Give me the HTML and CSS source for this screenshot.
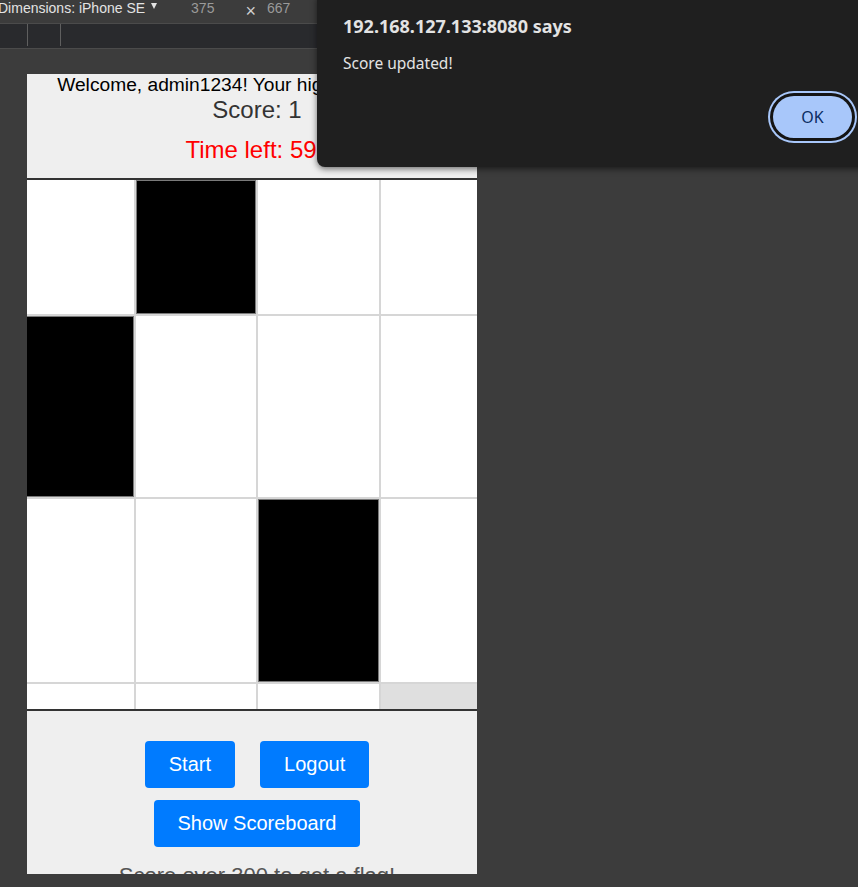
FILE: index.html
```html
<!DOCTYPE html>
<html lang="en">
<head>
<meta charset="utf-8">
<title>Tiles</title>
<link rel="stylesheet" href="styles.css">
</head>
<body>
<div class="devbar">
  <span class="dim">Dimensions: iPhone SE</span><span class="caret"></span>
  <span class="num num-w">375</span><span class="times">×</span><span class="num num-h">667</span>
</div>
<div class="toolbar"><span class="sep sep-a"></span><span class="sep sep-b"></span></div>
<div class="stage">
  <div class="device">
    <div class="page">
      <header class="hud">
        <p class="welcome">Welcome, admin1234! Your highest score is 10</p>
        <p class="score">Score: 1</p>
        <p class="timer">Time left: 59s</p>
      </header>
      <div class="board">
        <div class="tile"></div><div class="tile black"></div><div class="tile"></div><div class="tile"></div>
        <div class="tile black"></div><div class="tile"></div><div class="tile"></div><div class="tile"></div>
        <div class="tile"></div><div class="tile"></div><div class="tile black"></div><div class="tile"></div>
        <div class="tile"></div><div class="tile"></div><div class="tile"></div><div class="tile pressed"></div>
      </div>
      <footer class="controls">
        <div class="btn-row">
          <button class="btn">Start</button>
          <button class="btn">Logout</button>
        </div>
        <div class="btn-row second">
          <button class="btn">Show Scoreboard</button>
        </div>
        <p class="note">Score over 300 to get a flag!</p>
      </footer>
    </div>
  </div>
</div>
<div class="alert">
  <div class="alert-title">192.168.127.133:8080 says</div>
  <div class="alert-msg">Score updated!</div>
  <div class="alert-actions"><button class="alert-ok">OK</button></div>
</div>
</body>
</html>
```
FILE: styles.css
```css
html, body {
  margin: 0;
  padding: 0;
}
body {
  background: #3c3c3c;
  width: 858px;
  height: 887px;
  overflow: hidden;
  position: relative;
  font-family: "Liberation Sans", Arial, sans-serif;
}
.devbar {
  height: 23px;
  border-bottom: 1px solid #4b4b4b;
  display: flex;
  align-items: flex-start;
  font-family: "Liberation Sans", Arial, sans-serif;
  font-size: 14px;
  line-height: 16px;
  white-space: nowrap;
}
.dim {
  color: #e3e3e3;
  margin-left: -2px;
}
.caret {
  width: 0;
  height: 0;
  margin: 3px 0 0 6px;
  border-left: 3.5px solid transparent;
  border-right: 3.5px solid transparent;
  border-top: 6px solid #e3e3e3;
}
.num {
  color: #9a9a9a;
}
.num-w {
  margin-left: 34px;
}
.times {
  color: #cfcfcf;
  font-size: 18px;
  line-height: 16px;
  margin-left: 31px;
  position: relative;
  top: 3px;
}
.num-h {
  margin-left: 11px;
}
.toolbar {
  height: 24px;
  background: #292a2d;
  border-bottom: 1px solid #4b4b4b;
  display: flex;
  align-items: flex-start;
}
.sep {
  width: 1px;
  height: 22px;
  background: #5f5f5f;
}
.sep-a {
  margin-left: 27px;
}
.sep-b {
  margin-left: 32px;
}
.stage {
  padding: 25px 0 0 27px;
}
.device {
  width: 450px;
  height: 800px;
  overflow: hidden;
  background: #efefef;
}
.page {
  width: 488px;
  margin-left: -14px;
}
.hud {
  height: 104px;
  border-bottom: 2px solid #333;
  background: #efefef;
  text-align: center;
}
.hud p {
  margin: 0;
  white-space: nowrap;
}
.welcome {
  font-size: 19.2px;
  line-height: 22px;
  color: #000;
}
.score {
  font-size: 24px;
  line-height: 28px;
  color: #333;
}
.timer {
  font-size: 24px;
  line-height: 28px;
  color: #ff0000;
  padding-top: 12px;
}
.board {
  display: grid;
  grid-template-columns: 121px 120px 121px 121px;
  grid-template-rows: 134px 181px 183px 25px;
  gap: 2px;
  height: 529px;
  overflow: hidden;
  background: #d6d6d6;
}
.tile {
  background: #fff;
}
.tile.black {
  background: #000;
  box-shadow: inset 0 0 0 1px #7a7a7a;
}
.tile.pressed {
  background: #dfdfdf;
}
.controls {
  border-top: 2px solid #333;
  background: #efefef;
  padding-top: 30px;
  text-align: center;
  height: 200px;
}
.btn-row {
  display: flex;
  justify-content: center;
  gap: 25px;
}
.btn-row.second {
  margin-top: 12px;
}
.btn {
  font-family: "Liberation Sans", Arial, sans-serif;
  font-size: 20px;
  line-height: 23px;
  color: #fff;
  background: #007bff;
  border: none;
  border-radius: 4px;
  padding: 12px 24px;
}
.note {
  margin: 16px 0 0;
  font-size: 22px;
  color: #555;
}
.alert {
  position: absolute;
  left: 317px;
  top: -8px;
  width: 570px;
  height: 175px;
  padding: 22px 35px 0 26px;
  box-sizing: border-box;
  background: #1f1f1f;
  border-radius: 8px;
  box-shadow: 0 2px 6px rgba(0, 0, 0, 0.55);
  font-family: "Noto Sans", sans-serif;
  color: #e3e3e3;
}
.alert-title {
  font-size: 18px;
  line-height: 24px;
  font-weight: 700;
}
.alert-msg {
  margin-top: 15px;
  font-size: 15.5px;
  line-height: 20px;
}
.alert-actions {
  display: flex;
  justify-content: flex-end;
  margin-top: 23px;
}
.alert-ok {
  width: 79px;
  height: 42px;
  border: none;
  border-radius: 21px;
  background: #a8c7fa;
  color: #0b2d62;
  font-family: "Noto Sans", sans-serif;
  font-size: 16px;
  box-shadow: 0 0 0 3px #141414, 0 0 0 5px #a8c7fa;
}
```
